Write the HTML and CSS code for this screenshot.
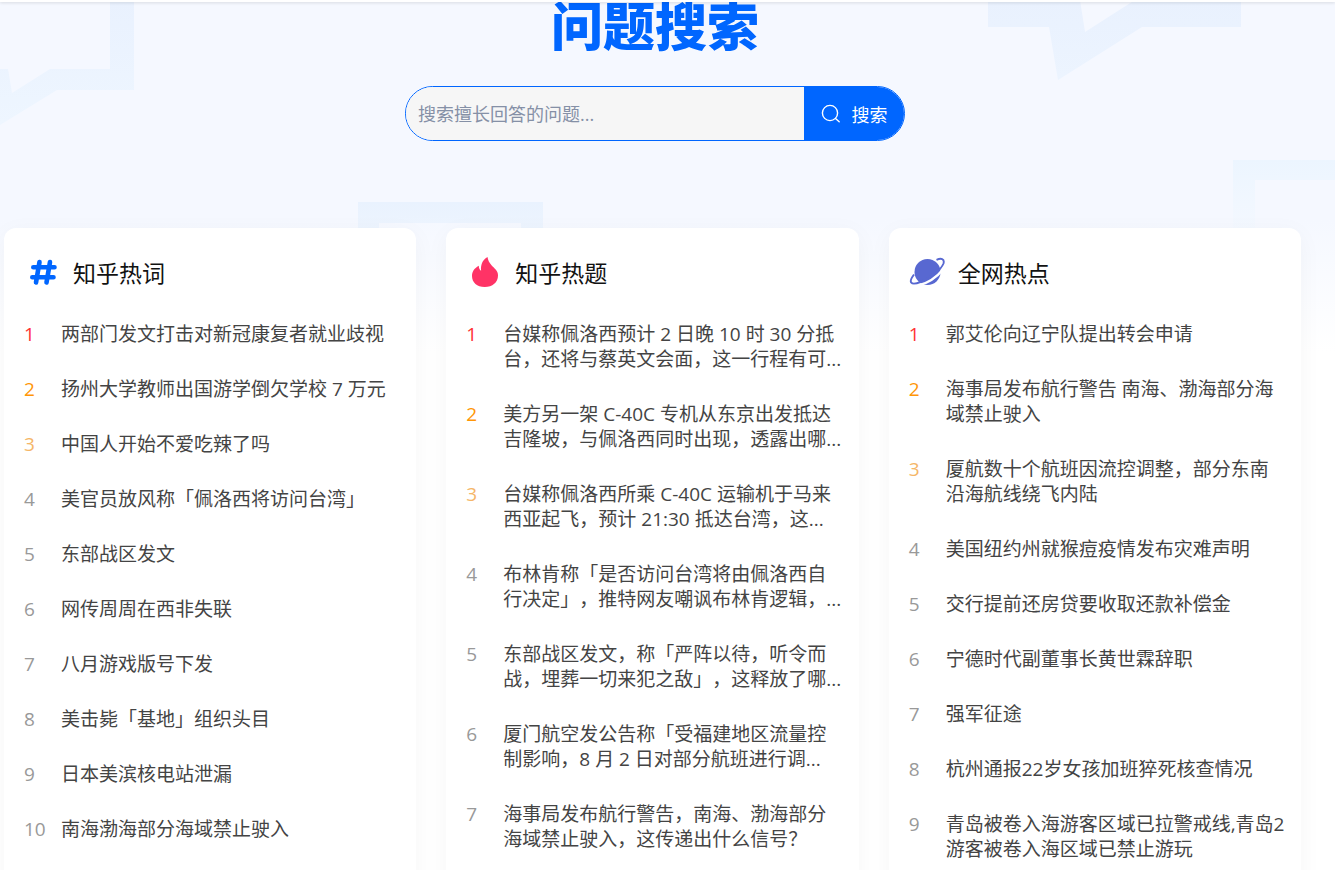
FILE: index.html
```html
<!DOCTYPE html>
<html lang="zh-CN">
<head>
<meta charset="utf-8">
<title>问题搜索</title>
<link rel="stylesheet" href="styles.css">
</head>
<body>
<div class="topbar"></div>
<svg class="backdrop" viewBox="0 0 1335 360" aria-hidden="true">
  <defs>
    <linearGradient id="a" x1="0" y1="0" x2="0" y2="125" gradientUnits="userSpaceOnUse"><stop stop-color="#e9f1fe"/><stop offset="1" stop-color="#eef6ff"/></linearGradient>
    <linearGradient id="b" x1="0" y1="202" x2="0" y2="340" gradientUnits="userSpaceOnUse"><stop stop-color="#e9f2fe"/><stop offset="1" stop-color="#f2f8ff" stop-opacity="0"/></linearGradient>
    <linearGradient id="c" x1="0" y1="160" x2="0" y2="260" gradientUnits="userSpaceOnUse"><stop stop-color="#ecf5ff"/><stop offset="1" stop-color="#f0f8ff" stop-opacity="0"/></linearGradient>
  </defs>
  <path fill="url(#a)" d="M110 0h24v90H57L0 125V69h8l4 24 38-24h60z"/>
  <path fill="url(#a)" d="M988 0h92l5 32L1135 0h106v27h-99l-84 53-9-53h-61z"/>
  <path fill="url(#b)" d="M358 202h185v138h-22V223H379v117h-21z"/>
  <path fill="url(#c)" d="M1233 160h102v20h-80v80h-22z"/>
</svg>
<main class="page">
  <header class="hero">
    <h1 class="title">问题搜索</h1>
    <form class="search">
      <input class="search-input" type="text" aria-label="搜索问题" placeholder="搜索擅长回答的问题...">
      <button class="search-button" type="button">
        <svg class="search-icon" viewBox="0 0 20 20" aria-hidden="true"><circle cx="9" cy="9" r="7.6"/><path d="M14.5 14.5l3.7 3.3"/></svg>
        <span>搜索</span>
      </button>
    </form>
  </header>
  <div class="cards">
    <section class="card">
      <h2 class="card-title">
        <svg class="card-icon" viewBox="0 0 36 36" aria-hidden="true"><path class="hash" d="M15.500 7l-3.500 20.500M26 7l-3.500 20.500M9.300 12.300h21.200M8.300 22.300h21.200"/></svg>
        知乎热词
      </h2>
      <ol class="list">
        <li class="item"><span class="rank first">1</span><span class="text">两部门发文打击对新冠康复者就业歧视</span></li>
        <li class="item"><span class="rank second">2</span><span class="text">扬州大学教师出国游学倒欠学校 7 万元</span></li>
        <li class="item"><span class="rank third">3</span><span class="text">中国人开始不爱吃辣了吗</span></li>
        <li class="item"><span class="rank">4</span><span class="text">美官员放风称「佩洛西将访问台湾」</span></li>
        <li class="item"><span class="rank">5</span><span class="text">东部战区发文</span></li>
        <li class="item"><span class="rank">6</span><span class="text">网传周周在西非失联</span></li>
        <li class="item"><span class="rank">7</span><span class="text">八月游戏版号下发</span></li>
        <li class="item"><span class="rank">8</span><span class="text">美击毙「基地」组织头目</span></li>
        <li class="item"><span class="rank">9</span><span class="text">日本美滨核电站泄漏</span></li>
        <li class="item"><span class="rank">10</span><span class="text">南海渤海部分海域禁止驶入</span></li>
      </ol>
    </section>
    <section class="card">
      <h2 class="card-title">
        <svg class="card-icon" viewBox="0 0 36 36" aria-hidden="true"><path fill="#ff3366" d="M21.500 2C16 5 14.600 10.500 15.100 15.800C13.600 14.900 12.800 13.100 12.800 10.800C8 13.500 6 17 6 21C6 27.500 11 32 18.700 32C26.500 32 32 27.300 32 20.500C32 15.500 28.500 13.500 25.500 10.200C23.300 7.800 22 5.300 21.500 2z"/></svg>
        知乎热题
      </h2>
      <ol class="list">
        <li class="item"><span class="rank first">1</span><span class="text">台媒称佩洛西预计 2 日晚 10 时 30 分抵<br>台，还将与蔡英文会面，这一行程有可...</span></li>
        <li class="item"><span class="rank second">2</span><span class="text">美方另一架 C-40C 专机从东京出发抵达<br>吉隆坡，与佩洛西同时出现，透露出哪...</span></li>
        <li class="item"><span class="rank third">3</span><span class="text">台媒称佩洛西所乘 C-40C 运输机于马来<br>西亚起飞，预计 21:30 抵达台湾，这...</span></li>
        <li class="item"><span class="rank">4</span><span class="text">布林肯称「是否访问台湾将由佩洛西自<br>行决定」，推特网友嘲讽布林肯逻辑，...</span></li>
        <li class="item"><span class="rank">5</span><span class="text">东部战区发文，称「严阵以待，听令而<br>战，埋葬一切来犯之敌」，这释放了哪...</span></li>
        <li class="item"><span class="rank">6</span><span class="text">厦门航空发公告称「受福建地区流量控<br>制影响，8 月 2 日对部分航班进行调...</span></li>
        <li class="item"><span class="rank">7</span><span class="text">海事局发布航行警告，南海、渤海部分<br>海域禁止驶入，这传递出什么信号？</span></li>
      </ol>
    </section>
    <section class="card">
      <h2 class="card-title">
        <svg class="card-icon" viewBox="0 0 36 36" aria-hidden="true"><circle cx="18.500" cy="17" r="13" fill="#5868d1"/><path d="M9 30.500C18 28.500 27 23 34 14.500" fill="none" stroke="#fff" stroke-width="2.400"/><path d="M5 19.500C-1 27.500 1.500 31 12 26.800C22 23 31.500 15.500 34.500 8.500C35.800 3.500 32 2.800 27.500 4.800" fill="none" stroke="#5868d1" stroke-width="1.900"/></svg>
        全网热点
      </h2>
      <ol class="list">
        <li class="item"><span class="rank first">1</span><span class="text">郭艾伦向辽宁队提出转会申请</span></li>
        <li class="item"><span class="rank second">2</span><span class="text">海事局发布航行警告 南海、渤海部分海<br>域禁止驶入</span></li>
        <li class="item"><span class="rank third">3</span><span class="text">厦航数十个航班因流控调整，部分东南<br>沿海航线绕飞内陆</span></li>
        <li class="item"><span class="rank">4</span><span class="text">美国纽约州就猴痘疫情发布灾难声明</span></li>
        <li class="item"><span class="rank">5</span><span class="text">交行提前还房贷要收取还款补偿金</span></li>
        <li class="item"><span class="rank">6</span><span class="text">宁德时代副董事长黄世霖辞职</span></li>
        <li class="item"><span class="rank">7</span><span class="text">强军征途</span></li>
        <li class="item"><span class="rank">8</span><span class="text">杭州通报22岁女孩加班猝死核查情况</span></li>
        <li class="item"><span class="rank">9</span><span class="text">青岛被卷入海游客区域已拉警戒线,青岛2<br>游客被卷入海区域已禁止游玩</span></li>
      </ol>
    </section>
  </div>
</main>
</body>
</html>
```
FILE: styles.css
```css
* { box-sizing: border-box; }
html { overflow: hidden; }
body {
  margin: 0;
  position: relative;
  background: #fff linear-gradient(#f5f8ff 0, #f5f8ff 220px, #fff 352px) no-repeat 0 0 / 100% 352px;
  font-family: "Open Sans", "Noto Sans CJK SC", sans-serif;
  color: #444;
  text-spacing-trim: space-all;
}
.topbar {
  position: relative;
  z-index: 2;
  height: 2px;
  background: #fff;
  box-shadow: 0 1px 3px rgba(18, 18, 18, 0.14);
}
.backdrop {
  position: absolute;
  top: 0;
  left: 0;
  width: 100%;
}
.page { position: relative; }
.hero {
  display: flex;
  flex-direction: column;
  align-items: center;
  padding-right: 25px;
}
.title {
  margin: 0;
  font-family: "Noto Sans CJK SC", sans-serif;
  font-size: 52px;
  line-height: 44px;
  font-weight: 900;
  color: #06f;
}
.search {
  display: flex;
  width: 500px;
  height: 55px;
  margin-top: 40px;
  border: 1px solid #06f;
  border-radius: 28px;
  overflow: hidden;
}
.search-input {
  flex: 1;
  min-width: 0;
  padding: 0 12px;
  border: 0;
  background: #f6f6f6;
  font: inherit;
  font-size: 18px;
}
.search-input::placeholder { color: #8590a6; opacity: 1; }
.search-button {
  display: flex;
  align-items: center;
  justify-content: center;
  gap: 11px;
  width: 100px;
  padding: 0;
  border: 0;
  background: #06f;
  color: #fff;
  font: inherit;
  font-size: 18px;
}
.search-icon {
  width: 20px;
  height: 20px;
  fill: none;
  stroke: #fff;
  stroke-width: 1.4;
  stroke-linecap: round;
}
.cards {
  display: grid;
  grid-template-columns: repeat(3, minmax(0, 1fr));
  gap: 30px;
  margin-top: 87px;
  padding: 0 34px 0 4px;
}
.card {
  padding: 25px 20px;
  border-radius: 12px;
  background: #fff;
  box-shadow: 0 5px 25px rgba(18, 18, 18, 0.04);
}
.card-title {
  display: flex;
  align-items: center;
  gap: 13px;
  margin: 0;
  font-size: 23px;
  line-height: 40px;
  font-weight: 400;
  color: #121212;
}
.card-icon {
  width: 36px;
  height: 36px;
}
.hash {
  fill: none;
  stroke: #06f;
  stroke-width: 4.6;
  stroke-linecap: round;
}
.list {
  display: grid;
  gap: 30px;
  margin: 29px 0 0;
  padding: 0;
  list-style: none;
}
.item {
  display: flex;
  font-size: 19px;
  line-height: 25px;
}
.rank {
  flex: none;
  width: 37px;
  color: #999;
}
.first { color: #f33; }
.second { color: #ff9607; }
.third { color: #f5b668; }
.text { white-space: nowrap; }
```
